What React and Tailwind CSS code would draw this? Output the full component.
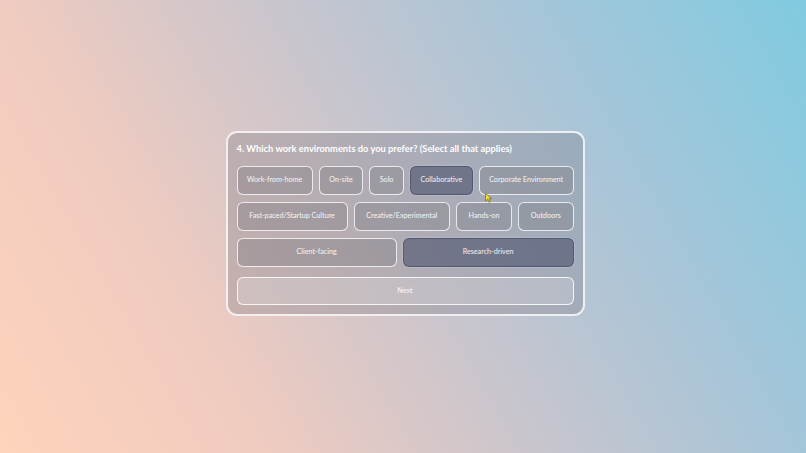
import React, { useState } from "react";

const rows = [
  ["Work-from-home", "On-site", "Solo", "Collaborative", "Corporate Environment"],
  ["Fast-paced/Startup Culture", "Creative/Experimental", "Hands-on", "Outdoors"],
  ["Client-facing", "Research-driven"],
];

const App = () => {
  const [selected, setSelected] = useState(["Collaborative", "Research-driven"]);

  const toggle = (opt) => {
    setSelected((s) => (s.includes(opt) ? s.filter((x) => x !== opt) : [...s, opt]));
  };

  return (
    <div
      className="w-full h-[453px] flex items-center justify-center bg-[linear-gradient(60deg,#ffd3bb_0%,#efcbc0_25%,#c9c5cd_50%,#a9c5d8_72%,#80cbe0_100%)]"
      style={{ fontFamily: 'Lato, "Liberation Sans", sans-serif' }}
    >
      <div className="relative w-[359px] -mt-[6px] ml-[4px] rounded-[11px] border-2 border-white/80 bg-[rgba(120,115,125,0.3)] px-[9px] pt-[9px] pb-[9px]">
        <h2 className="text-[9.3px] font-bold text-white leading-[14px] mb-[10px]">
          4. Which work environments do you prefer? (Select all that applies)
        </h2>
        <div className="flex flex-col gap-[7px]">
          {rows.map((row, i) => (
            <div key={i} className="flex gap-[6px]">
              {row.map((opt) => {
                const on = selected.includes(opt);
                return (
                  <button
                    key={opt}
                    onClick={() => toggle(opt)}
                    className={
                      "grow min-w-0 h-[29px] px-[9.5px] rounded-[6px] border-[1.5px] text-[7.2px] text-white/90 whitespace-nowrap " +
                      (on
                        ? "bg-[rgba(65,72,100,0.55)] border-[rgba(60,70,100,0.6)] shadow-[0_0_0_1px_rgba(255,255,255,0.15)]"
                        : "bg-[rgba(120,120,125,0.35)] border-white/80")
                    }
                  >
                    {opt}
                  </button>
                );
              })}
            </div>
          ))}
        </div>
        <button className="mt-[10px] w-full h-[28px] rounded-[6px] border-[1.5px] border-white/85 bg-white/20 text-[7.2px] text-white/90">
          Next
        </button>
        <svg
          className="absolute left-[257px] top-[60px]"
          width="8"
          height="10"
          viewBox="0 0 8 10"
        >
          <path d="M0.5 0.5 L0.5 8 L2.5 6.2 L4 9.3 L5.3 8.7 L3.9 5.7 L6.7 5.7 Z" fill="#f5e03a" stroke="#5a5200" strokeWidth="0.6" />
        </svg>
      </div>
    </div>
  );
};

export default App;
